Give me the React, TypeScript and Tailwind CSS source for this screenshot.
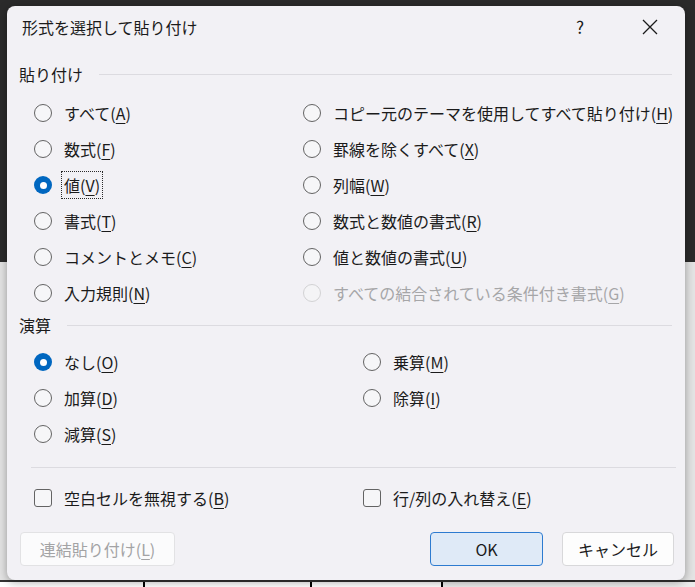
import React from "react"

const cx = (...a: (string | false | undefined)[]) => a.filter(Boolean).join(" ")

type Opt = {
	text: string
	k: string
	checked?: boolean
	disabled?: boolean
	focus?: boolean
}

const pasteLeft: Opt[] = [
	{ text: "すべて", k: "A" },
	{ text: "数式", k: "F" },
	{ text: "値", k: "V", checked: true, focus: true },
	{ text: "書式", k: "T" },
	{ text: "コメントとメモ", k: "C" },
	{ text: "入力規則", k: "N" },
]

const pasteRight: Opt[] = [
	{ text: "コピー元のテーマを使用してすべて貼り付け", k: "H" },
	{ text: "罫線を除くすべて", k: "X" },
	{ text: "列幅", k: "W" },
	{ text: "数式と数値の書式", k: "R" },
	{ text: "値と数値の書式", k: "U" },
	{ text: "すべての結合されている条件付き書式", k: "G", disabled: true },
]

const opLeft: Opt[] = [
	{ text: "なし", k: "O", checked: true },
	{ text: "加算", k: "D" },
	{ text: "減算", k: "S" },
]

const opRight: Opt[] = [
	{ text: "乗算", k: "M" },
	{ text: "除算", k: "I" },
]

const Label = ({ text, k }: { text: string; k: string }) => (
	<>
		{text}(
		<span className="underline decoration-1 underline-offset-[3px]">{k}</span>)
	</>
)

const Radio = ({ checked, disabled }: { checked?: boolean; disabled?: boolean }) => (
	<span
		className={cx(
			"w-[18px] h-[18px] rounded-full shrink-0 flex items-center justify-center",
			checked
				? "bg-[#0067c0]"
				: disabled
				? "border-[1.5px] border-[#d2d2d4] bg-[#f4f4f6]"
				: "border-[1.5px] border-[#636363] bg-[#f6f6f8]"
		)}
	>
		{checked && <span className="w-[7px] h-[7px] rounded-full bg-white" />}
	</span>
)

const RadioRow = ({ o }: { o: Opt }) => (
	<div className="flex items-center h-[36px] gap-[12px]">
		<Radio checked={o.checked} disabled={o.disabled} />
		<span
			className={cx(
				"whitespace-nowrap leading-[20px]",
				o.disabled ? "text-[#a6a6a8]" : "text-[#1b1b1b]",
				o.focus && "border border-dotted border-[#2a2a2a] -ml-[3px] px-[2px] py-[3px]"
			)}
		>
			<Label text={o.text} k={o.k} />
		</span>
	</div>
)

const CheckRow = ({ text, k }: { text: string; k: string }) => (
	<div className="flex items-center h-[36px] gap-[12px]">
		<span className="w-[18px] h-[18px] rounded-[3px] shrink-0 border-[1.5px] border-[#636363] bg-[#f6f6f8]" />
		<span className="whitespace-nowrap leading-[20px] text-[#1b1b1b]">
			<Label text={text} k={k} />
		</span>
	</div>
)

const GroupHeader = ({ title }: { title: string }) => (
	<div className="flex items-center h-[24px] pl-[12px] pr-[13px]">
		<span className="text-[#1b1b1b] whitespace-nowrap">{title}</span>
		<span className="flex-1 h-px bg-[#dcdbe0] ml-[16px]" />
	</div>
)

export default function App() {
	return (
		<div
			className="w-[695px] h-[587px] overflow-hidden bg-[linear-gradient(to_bottom,#2b2b2b_0px,#2b2b2b_262px,#e4e4e4_262px)] pt-[6px] pl-[7px]"
			style={{ fontFamily: '"Noto Sans CJK JP", "Noto Sans", sans-serif' }}
		>
			<div className="relative z-10 w-[678px] h-[574px] rounded-[8px] bg-[#f2f1f5] shadow-[0_2px_10px_rgba(0,0,0,0.35)] flex flex-col text-[16px]">
				{/* title bar */}
				<div className="h-[42px] flex items-center pl-[15px]">
					<span className="flex-1 text-[#1b1b1b]">形式を選択して貼り付け</span>
					<span className="w-[20px] text-center text-[17px] text-[#1b1b1b] mr-[52px]">?</span>
					<svg width="16" height="16" viewBox="0 0 16 16" className="mr-[27px]">
						<path d="M1 1L15 15M15 1L1 15" stroke="#1b1b1b" strokeWidth="1.3" />
					</svg>
				</div>

				{/* 貼り付け */}
				<div className="mt-[14px]">
					<GroupHeader title="貼り付け" />
				</div>
				<div className="mt-[9px] pl-[27px] grid grid-cols-[269px_1fr]">
					<div className="flex flex-col">
						{pasteLeft.map((o) => (
							<RadioRow key={o.k} o={o} />
						))}
					</div>
					<div className="flex flex-col">
						{pasteRight.map((o) => (
							<RadioRow key={o.k} o={o} />
						))}
					</div>
				</div>

				{/* 演算 */}
				<div className="mt-[2px]">
					<GroupHeader title="演算" />
				</div>
				<div className="mt-[7px] pl-[27px] grid grid-cols-[329px_1fr] h-[108px]">
					<div className="flex flex-col">
						{opLeft.map((o) => (
							<RadioRow key={o.k} o={o} />
						))}
					</div>
					<div className="flex flex-col">
						{opRight.map((o) => (
							<RadioRow key={o.k} o={o} />
						))}
					</div>
				</div>

				<div className="mt-[15px] ml-[24px] mr-[9px] h-px bg-[#dcdbe0]" />

				<div className="mt-[12px] pl-[27px] grid grid-cols-[329px_1fr]">
					<CheckRow text="空白セルを無視する" k="B" />
					<CheckRow text="行/列の入れ替え" k="E" />
				</div>

				{/* buttons */}
				<div className="mt-[16px] flex items-center pl-[13px] pr-[11px]">
					<button className="w-[155px] h-[34px] rounded-[4px] border border-[#e2e2e4] bg-[#fbfbfc] text-[#a3a3a5]">
						<Label text="連結貼り付け" k="L" />
					</button>
					<div className="flex-1" />
					<button className="w-[113px] h-[34px] rounded-[4px] border-[1.5px] border-[#2d7bd0] bg-[#dfeaf7] text-[#1b1b1b]">
						OK
					</button>
					<button className="ml-[19px] w-[112px] h-[34px] rounded-[4px] border border-[#d8d8da] bg-[#fdfdfd] text-[#1b1b1b]">
						キャンセル
					</button>
				</div>
			</div>

			{/* sheet grid peeking out below the dialog */}
			<div className="-ml-[7px] w-[695px] h-[7px] bg-white flex border-t-[2px] border-t-[#333]">
				<div className="w-[143px] h-full" />
				<div className="w-[167px] h-full border-l-[2px] border-black" />
				<div className="w-[131px] h-full border-l-[2px] border-black" />
				<div className="flex-1 h-full border-l-[2px] border-black bg-[#ececec]" />
			</div>
		</div>
	)
}
